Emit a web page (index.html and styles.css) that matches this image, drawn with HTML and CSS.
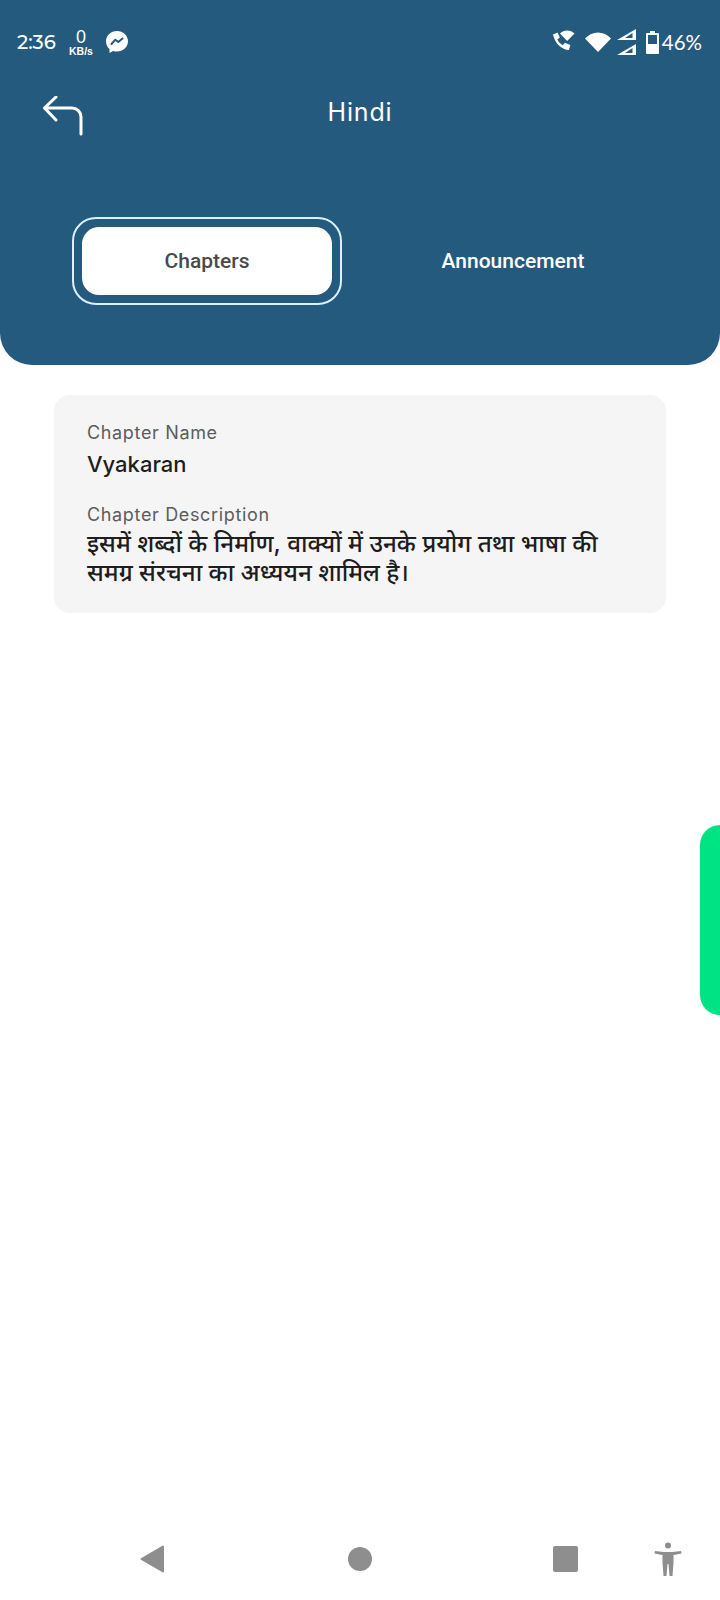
FILE: index.html
```html
<!DOCTYPE html>
<html lang="hi">
<head>
<meta charset="utf-8">
<title>Hindi</title>
<link rel="stylesheet" href="styles.css">
</head>
<body>
<div class="screen">
  <header class="header">
    <div class="status">
      <div class="status-left">
        <span class="time">2:36</span>
        <span class="speed"><b class="speed-num">0</b><b class="speed-unit">KB/s</b></span>
        <svg class="messenger" viewBox="0 0 22 22" width="22" height="22"><path fill="#fff" d="M11 0C4.900 0 0 4.500 0 10.400c0 3.100 1.300 5.700 3.500 7.600v4l3.600-2.100c1.200.4 2.500.6 3.900.6 6.100 0 11-4.500 11-10.200S17.100 0 11 0z"/><path fill="none" stroke="#245a7d" stroke-width="2" stroke-linejoin="round" stroke-linecap="round" d="M5.500 13l3.800-4.300 3 2.300 4.200-3.500"/></svg>
      </div>
      <div class="status-right">
        <svg class="s-call" viewBox="0 0 24 24" width="24" height="24"><path fill="#fff" d="M1 4.500 5.500 2.500l2.300 5-2.400 2c1 2.300 3 4.400 5.500 5.700l2-2.400 5.500 2.200-1.500 5C10 20 2.500 13 1 4.500z"/><path fill="#fff" d="M8 3.500C11.500-.5 18.500-.5 22.500 3.500l-7.300 7.500z"/></svg>
        <svg class="s-wifi" viewBox="0 0 26 20" width="26" height="20"><path fill="#fff" d="M0 6.500C7-1.500 19-1.500 26 6.500L13 20z"/></svg>
        <svg class="s-signal" viewBox="0 0 20 26" width="20" height="26"><path fill="#fff" fill-rule="evenodd" d="M0 11 19 0v11zM15.500 4 8 9h7.500zM0 26l19-11v11zM15.500 19 8 24h7.500z"/></svg>
        <svg class="s-batt" viewBox="0 0 13 23" width="13" height="23"><path fill="#fff" fill-rule="evenodd" d="M4 0h5v2h3a1 1 0 0 1 1 1v19a1 1 0 0 1-1 1H1a1 1 0 0 1-1-1V3a1 1 0 0 1 1-1h3zM2 4v9h9V4z"/></svg>
        <span class="pct">46%</span>
      </div>
    </div>
    <div class="titlebar">
      <svg class="back" viewBox="0 0 40 40" width="40" height="40"><path fill="none" stroke="#fff" stroke-width="3" stroke-linecap="round" stroke-linejoin="round" d="M13 1 1.500 12 13 24M1.500 12H29a9 9 0 0 1 9 9v17"/></svg>
      <h1 class="title">Hindi</h1>
    </div>
    <div class="tabs">
      <div class="tab-ring"><div class="tab-active">Chapters</div></div>
      <div class="tab-other">Announcement</div>
    </div>
  </header>
  <main class="content">
    <section class="card">
      <div class="label">Chapter Name</div>
      <div class="name">Vyakaran</div>
      <div class="label label-desc">Chapter Description</div>
      <p class="desc">इसमें शब्दों के निर्माण, वाक्यों में उनके प्रयोग तथा भाषा की समग्र संरचना का अध्ययन शामिल है।</p>
    </section>
  </main>
  <div class="side-tab"></div>
  <nav class="navbar">
    <svg class="n-back" viewBox="0 0 24 28" width="24" height="28"><path fill="#8e8e8e" stroke="#8e8e8e" stroke-width="2" stroke-linejoin="round" d="M1.500 14 23 1.500v25z"/></svg>
    <span class="n-home"></span>
    <span class="n-recent"></span>
    <svg class="n-access" viewBox="0 0 28 34" width="28" height="34"><circle cx="14" cy="3.500" r="3" fill="#8e8e8e"/><path fill="#8e8e8e" d="M1 9l9 1h8l9-1 .5 2.500-8 1.500v7.500L18.500 34h-3l-1-12h-1l-1 12h-3l-1-13.500V13l-8-1.500z"/></svg>
  </nav>
</div>
</body>
</html>
```
FILE: styles.css
```css
* { box-sizing: border-box; }
html, body { margin: 0; padding: 0; background: #fff; }
.screen {
  position: relative;
  width: 720px;
  height: 1600px;
  display: flex;
  flex-direction: column;
  overflow: hidden;
  font-family: Inter, "Noto Sans", "Noto Sans Devanagari", sans-serif;
}
.header {
  height: 365px;
  background: #245a7d;
  border-radius: 0 0 32px 32px;
  color: #fff;
  flex: none;
  padding-top: 26px;
}
.status {
  height: 32px;
  display: flex;
  justify-content: space-between;
  align-items: center;
  padding: 0 18px 0 17px;
}
.status-left, .status-right { display: flex; align-items: center; }
.time { font: 500 19.500px Montserrat, Lato, "Noto Sans", sans-serif; width: 48px; }
.speed { display: flex; flex-direction: column; align-items: center; width: 28px; margin-left: 2px; font-family: "Liberation Sans", sans-serif; }
.speed-num { font-size: 18px; line-height: 18px; font-weight: 400; }
.speed-unit { font-size: 10.500px; line-height: 10px; }
.messenger { margin-left: 11px; }
.status-right { gap: 6px; }
.s-call { margin-right: 3px; }
.s-signal { margin-left: 0; }
.s-batt { margin-left: 3px; }
.pct { font: 400 20.500px Lato, "Noto Sans", sans-serif; margin-left: -3px; }
.titlebar {
  position: relative;
  height: 60px;
  margin-top: 38px;
  display: flex;
  align-items: flex-start;
  justify-content: center;
}
.back { position: absolute; left: 43px; top: 0; }
.title { margin: 0; font: 400 25px/32px Inter, Lato, sans-serif; letter-spacing: .8px; }
.tabs {
  margin-top: 61px;
  padding-left: 72px;
  display: flex;
  align-items: center;
}
.tab-ring {
  width: 270px;
  height: 88px;
  border: 2px solid #dcefff;
  border-radius: 24px;
  padding: 8px;
}
.tab-active {
  height: 100%;
  background: #fff;
  border-radius: 17px;
  color: #4a4a4a;
  font: 500 21px Roboto, sans-serif;
  display: flex;
  align-items: center;
  justify-content: center;
}
.tab-other {
  width: 342px;
  text-align: center;
  font: 500 21px Roboto, sans-serif;
  color: #fff;
}
.content { flex: 1; padding: 30px 54px 0; }
.card {
  height: 218px;
  background: #f5f5f5;
  border-radius: 16px;
  padding: 27px 33px 0;
}
.label { font-size: 18px; line-height: 22px; color: #5c5c5c; letter-spacing: .65px; }
.name { font-size: 22px; line-height: 28px; font-weight: 500; color: #1d1d1d; margin-top: 6px; }
.label-desc { margin-top: 26px; }
.desc { margin: 3px 0 0; font-size: 24.200px; line-height: 29px; color: #1d1d1d; font-weight: 500; max-width: 530px; }
.side-tab {
  position: absolute;
  left: 700px;
  top: 825px;
  width: 20px;
  height: 190px;
  background: #00e384;
  border-radius: 20px 0 0 20px;
}
.navbar {
  height: 82px;
  flex: none;
  display: flex;
  align-items: center;
  padding: 0 0 0 140px;
}
.n-home { width: 24px; height: 24px; border-radius: 50%; background: #8e8e8e; margin-left: 184px; }
.n-recent { width: 25px; height: 26px; border-radius: 2px; background: #8e8e8e; margin-left: 181px; }
.n-access { margin-left: 76px; }
```
